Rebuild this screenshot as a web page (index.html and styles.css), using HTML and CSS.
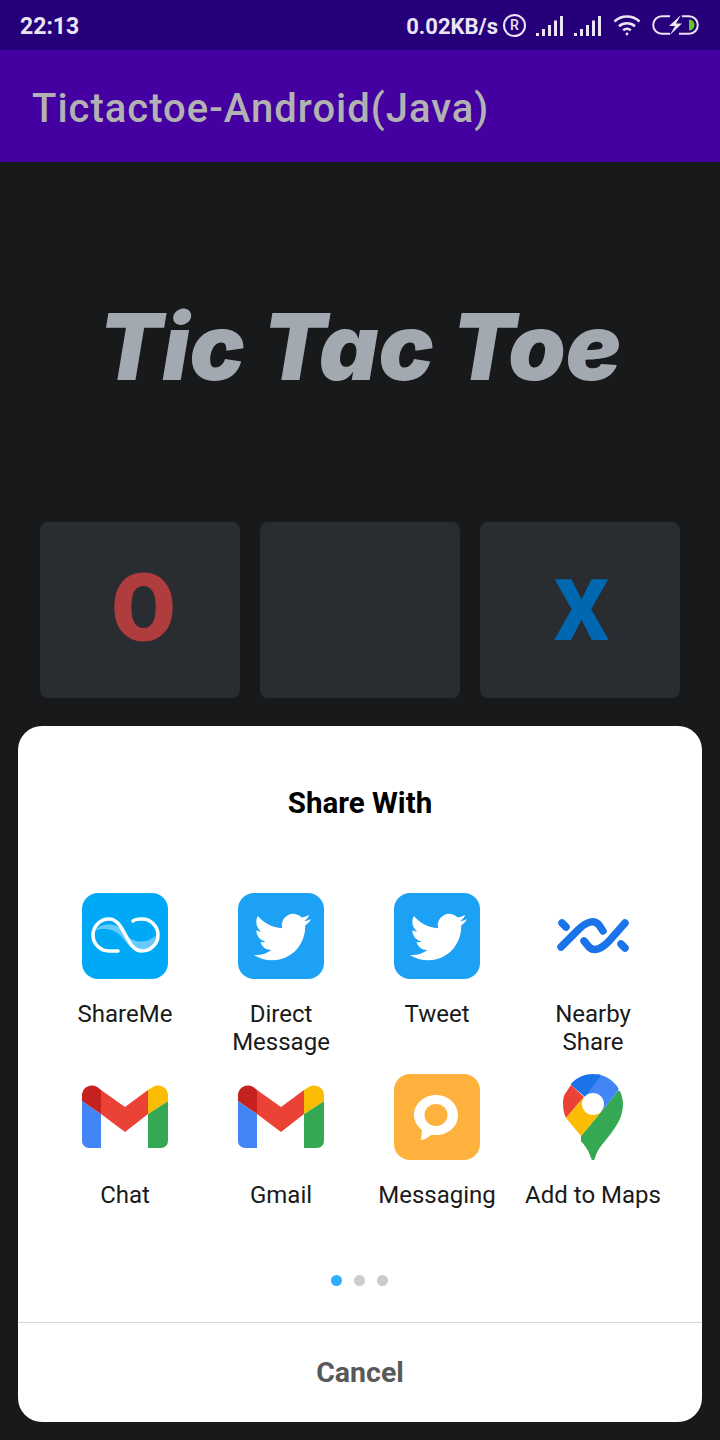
FILE: index.html
```html
<!DOCTYPE html>
<html lang="en">
<head>
    <meta charset="UTF-8">
    <meta name="viewport" content="width=device-width, initial-scale=1.0">
    <title>Tictactoe-Android(Java)</title>
    <link rel="stylesheet" href="styles.css">
</head>
<body>
    <svg class="defs" width="0" height="0">
        <defs>
            <symbol id="bird" viewBox="0 0 24 24">
                <path fill="#fff" d="M23.953 4.57a10 10 0 01-2.825.775 4.958 4.958 0 002.163-2.723c-.951.555-2.005.959-3.127 1.184a4.92 4.92 0 00-8.384 4.482C7.69 8.095 4.067 6.13 1.64 3.162a4.822 4.822 0 00-.666 2.475c0 1.71.87 3.213 2.188 4.096a4.904 4.904 0 01-2.228-.616v.06a4.923 4.923 0 003.946 4.827 4.996 4.996 0 01-2.212.085 4.936 4.936 0 004.604 3.417 9.867 9.867 0 01-6.102 2.105c-.39 0-.779-.023-1.17-.067a13.995 13.995 0 007.557 2.209c9.053 0 13.998-7.496 13.998-13.985 0-.21 0-.42-.015-.63A9.935 9.935 0 0024 4.59z"/>
            </symbol>
            <symbol id="signal" viewBox="0 0 27 20">
                <rect x="0" y="17" width="3" height="3"/>
                <rect x="6" y="13" width="3" height="7"/>
                <rect x="12" y="9" width="3" height="11"/>
                <rect x="18" y="4.500" width="3" height="15.500"/>
                <rect x="24" y="0" width="3" height="20"/>
            </symbol>
            <symbol id="gmail" viewBox="0 0 86 86">
                <path fill="#4285f4" d="M0 27l19 13v34H7a7 7 0 01-7-7z"/>
                <path fill="#34a853" d="M66 40l20-13v40a7 7 0 01-7 7H66z"/>
                <path fill="#ea4335" d="M19 16l24 17 23-17v24L43 58 19 40z"/>
                <path fill="#c5221f" d="M0 20a10 10 0 0116-6.500l3 2.500v24L0 27z"/>
                <path fill="#fbbc04" d="M66 16l4-2.500a10 10 0 0116 6.500v7L66 40z"/>
            </symbol>
        </defs>
    </svg>

    <div class="status-bar">
        <span class="clock">22:13</span>
        <div class="status-right">
            <span class="speed">0.02KB/s</span>
            <span class="roaming">R</span>
            <svg class="signal" width="27" height="20"><use href="#signal"/></svg>
            <svg class="signal signal-last" width="27" height="20"><use href="#signal"/></svg>
            <svg class="wifi" width="28" height="22" viewBox="0 0 28 22" fill="none" stroke="#ebe5f3" stroke-width="2.600">
                <path d="M1.500 7.500C8.500 .8 19.500 .8 26.500 7.500"/>
                <path d="M6 12.200c4.500-4 11.500-4 16 0"/>
                <path d="M10.200 16.200c2.200-1.700 5.400-1.700 7.600 0"/>
                <circle cx="14" cy="20" r="1.400" fill="#ebe5f3" stroke="none"/>
            </svg>
            <svg class="battery" width="47" height="20" viewBox="0 0 47 20">
                <path d="M18 1.200H10a8.800 8.800 0 000 17.600h8M27 18.800h10a8.800 8.800 0 000-17.600h-7" fill="none" stroke="#ebe5f3" stroke-width="2"/>
                <path d="M37 4.500a5.500 5.500 0 010 11z" fill="#5fc91e"/>
                <path d="M29 0L17 11h6l-5 9 12-11.500h-6z" fill="#ebe5f3"/>
            </svg>
        </div>
    </div>
    <div class="app-bar">Tictactoe-Android(Java)</div>

    <main class="game">
        <h1 class="game-title">Tic Tac Toe</h1>
        <div class="board">
            <div class="cell mark-o">O</div>
            <div class="cell"></div>
            <div class="cell mark-x">X</div>
        </div>
    </main>

    <div class="sheet">
        <h2 class="sheet-title">Share With</h2>
        <div class="app-grid">
            <div class="app">
                <svg class="app-icon" viewBox="0 0 86 86">
                    <rect width="86" height="86" rx="16" fill="#00a9f6"/>
                    <path d="M13 38C18 30 35 28 43 40 50 52 68 50 74 42 74 52 66 58 58 58 48 58 44 48 38 42 30 35 20 34 13 38z" fill="#fff" opacity=".4"/>
                    <path d="M36 58H27a16 16 0 010-32C43 26 44 58 60 58a16 16 0 000-32C56 26 53 26 51 28" fill="none" stroke="#fff" stroke-width="3.500" stroke-linecap="round"/>
                </svg>
                <span class="app-name">ShareMe</span>
            </div>
            <div class="app">
                <svg class="app-icon" viewBox="0 0 86 86">
                    <rect width="86" height="86" rx="16" fill="#1da1f5"/>
                    <use href="#bird" x="16" y="15.500" width="57" height="57"/>
                </svg>
                <span class="app-name">Direct Message</span>
            </div>
            <div class="app">
                <svg class="app-icon" viewBox="0 0 86 86">
                    <rect width="86" height="86" rx="16" fill="#1da1f5"/>
                    <use href="#bird" x="16" y="15.500" width="57" height="57"/>
                </svg>
                <span class="app-name">Tweet</span>
            </div>
            <div class="app">
                <svg class="app-icon" viewBox="0 0 86 86" fill="none" stroke="#1a73e8" stroke-width="7.500" stroke-linecap="round">
                    <path d="M11 54L28 37C36 29 44 26 49 32L53 38"/>
                    <path d="M75 30L60 47C52 56 44 59 39 54L34 48"/>
                    <path d="M12 30L16 34"/>
                    <path d="M75 55L71 51"/>
                </svg>
                <span class="app-name">Nearby Share</span>
            </div>
            <div class="app">
                <svg class="app-icon"><use href="#gmail"/></svg>
                <span class="app-name">Chat</span>
            </div>
            <div class="app">
                <svg class="app-icon"><use href="#gmail"/></svg>
                <span class="app-name">Gmail</span>
            </div>
            <div class="app">
                <svg class="app-icon" viewBox="0 0 86 86">
                    <rect width="86" height="86" rx="16" fill="#ffb13d"/>
                    <path d="M42 21C30 21 20 30 20 41 20 47 23 52 28 56 28 60 27 64 27 66 31 66 34 63 37 61 39 61 40 61 42 61 54 61 64 53 64 41 64 30 54 21 42 21z" fill="#fff"/>
                    <ellipse cx="42" cy="41" rx="11.500" ry="11" fill="#ffb13d"/>
                </svg>
                <span class="app-name">Messaging</span>
            </div>
            <div class="app">
                <svg class="app-icon" viewBox="-13 0 86 86">
                    <clipPath id="pin">
                        <path d="M30 0C46 0 60 13 60 30 60 44 52 54 46 62 40 70 35 74 32 84 31 87 29 87 28 84 25 74 20 70 14 62 8 54 0 44 0 30 0 13 14 0 30 0z"/>
                    </clipPath>
                    <g clip-path="url(#pin)">
                        <path fill="#34a853" d="M55 17L38 38 18 62V90H65V17z"/>
                        <path fill="#4285f4" d="M37 -3L22 22 38 38 55 17 60 -3z"/>
                        <path fill="#1a73e8" d="M8 11L22 23 37 3V-3H8z"/>
                        <path fill="#ea4335" d="M8 11L21 23 3 44 -5 30z"/>
                        <path fill="#fbbc04" d="M21 23L3 44 18 62 38 38z"/>
                    </g>
                    <circle cx="30" cy="30" r="11" fill="#fff"/>
                </svg>
                <span class="app-name">Add to Maps</span>
            </div>
        </div>
        <div class="dots">
            <span class="dot dot-active"></span>
            <span class="dot"></span>
            <span class="dot"></span>
        </div>
        <div class="cancel">Cancel</div>
    </div>
</body>
</html>
```

FILE: styles.css
```css
html, body {
    margin: 0;
    padding: 0;
}
body {
    position: relative;
    width: 720px;
    height: 1440px;
    overflow: hidden;
    background: #18191b;
    font-family: Roboto, "Liberation Sans", sans-serif;
}
.defs {
    position: absolute;
}
.status-bar {
    height: 50px;
    box-sizing: border-box;
    padding: 0 21px 0 20px;
    display: flex;
    align-items: center;
    justify-content: space-between;
    background: #26007a;
    color: #ebe5f3;
    font-weight: 700;
}
.clock {
    font-size: 23px;
    margin-top: 2px;
}
.status-right {
    display: flex;
    align-items: center;
}
.speed {
    font-size: 22px;
    margin-top: 3px;
}
.roaming {
    width: 19px;
    height: 19px;
    margin-left: 5px;
    border: 2px solid #ebe5f3;
    border-radius: 50%;
    display: flex;
    align-items: center;
    justify-content: center;
    font-size: 14px;
    font-weight: 500;
    line-height: 1;
}
.signal {
    fill: #ebe5f3;
    margin-left: 10px;
    margin-top: 1px;
}
.signal-last {
    margin-left: 11px;
}
.wifi {
    margin-left: 12px;
}
.battery {
    margin-left: 11px;
}
.app-bar {
    height: 112px;
    box-sizing: border-box;
    padding: 4px 0 0 32px;
    display: flex;
    align-items: center;
    background: #4400a0;
    color: #b2b2b2;
    font-size: 40px;
    font-weight: 500;
    letter-spacing: 1px;
}
.game {
    display: flex;
    flex-direction: column;
    padding: 0 40px;
}
.game-title {
    height: 360px;
    box-sizing: border-box;
    padding-top: 8px;
    margin: 0;
    display: flex;
    align-items: center;
    justify-content: center;
    color: #a2a9b1;
    font-family: Inter, Roboto, sans-serif;
    font-size: 92px;
    font-weight: 900;
    font-style: italic;
}
.board {
    display: flex;
    gap: 20px;
}
.cell {
    width: 200px;
    height: 176px;
    box-sizing: border-box;
    border-radius: 8px;
    background: #292c31;
    display: flex;
    align-items: center;
    justify-content: center;
    font-weight: 900;
}
.mark-o {
    color: #b03d3e;
    font-size: 92px;
    padding: 0 0 3px 7px;
    -webkit-text-stroke: 1px #b03d3e;
}
.mark-x {
    color: #0068b0;
    font-size: 86px;
    padding-left: 3px;
}
.sheet {
    position: absolute;
    left: 18px;
    top: 726px;
    width: 684px;
    height: 696px;
    border-radius: 24px;
    background: #fff;
    display: flex;
    flex-direction: column;
}
.sheet-title {
    margin: 0;
    height: 167px;
    box-sizing: border-box;
    padding-top: 59px;
    text-align: center;
    font-size: 29.500px;
    line-height: 36px;
    font-weight: 700;
    color: #000;
}
.app-grid {
    display: grid;
    grid-template-columns: repeat(4, 156px);
    grid-auto-rows: 181px;
    padding: 0 29px;
}
.app {
    display: flex;
    flex-direction: column;
    align-items: center;
    text-align: center;
}
.app-icon {
    width: 86px;
    height: 86px;
    flex: none;
}
.app-name {
    margin-top: 21px;
    width: 140px;
    font-size: 24px;
    line-height: 28px;
    color: #1a1a1a;
}
.dots {
    display: flex;
    justify-content: center;
    gap: 12px;
    margin-top: 20px;
    padding-right: 2px;
}
.dot {
    width: 11px;
    height: 11px;
    border-radius: 50%;
    background: #ccc;
}
.dot-active {
    background: #2eaeff;
}
.cancel {
    margin-top: 36px;
    flex: 1;
    border-top: 1px solid #d8d8d8;
    display: flex;
    align-items: center;
    justify-content: center;
    font-size: 28.500px;
    font-weight: 700;
    color: #595959;
}
```
